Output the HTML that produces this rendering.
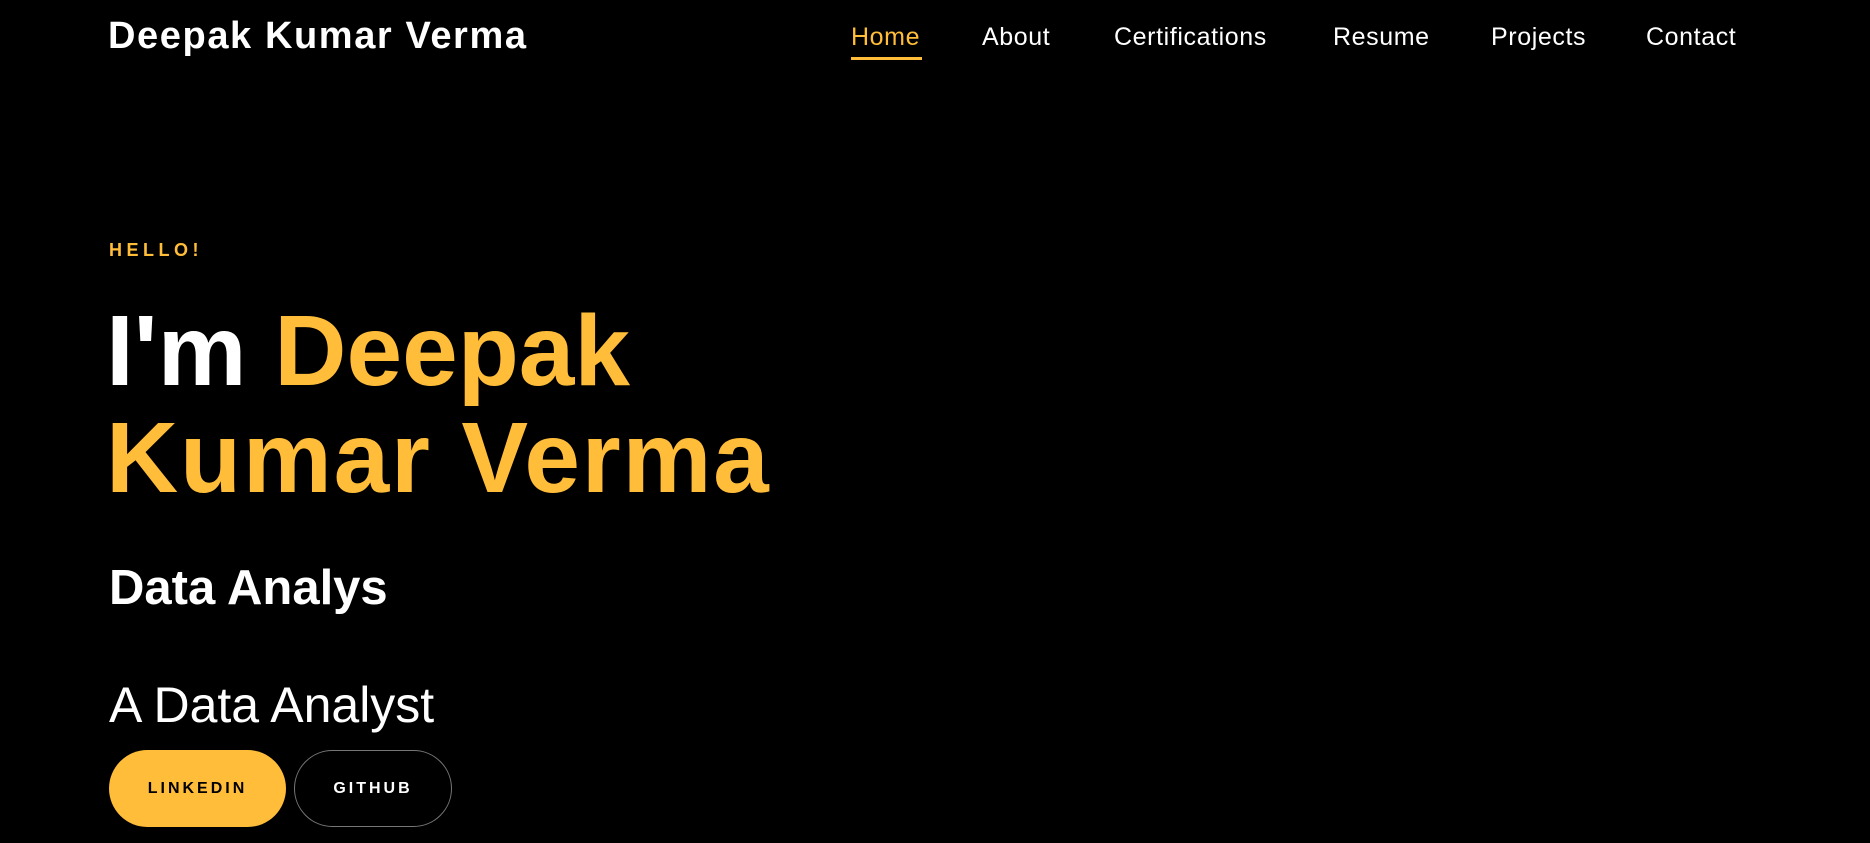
<!DOCTYPE html>
<html><head><meta charset="utf-8"><style>
*{margin:0;padding:0;box-sizing:border-box}
html,body{width:1870px;height:843px;background:#000;overflow:hidden;font-family:"Liberation Sans",sans-serif;color:#fff}
.logo{position:absolute;left:108px;top:15px;font-size:38px;font-weight:bold;letter-spacing:1.6px;white-space:nowrap}
.nav a{position:absolute;top:23px;font-size:25px;letter-spacing:0.6px;color:#fff;text-decoration:none;white-space:nowrap}
.nav a.act{color:#ffbd39}
.ul{position:absolute;left:851px;top:57px;width:71px;height:3px;background:#ffbd39}
.hello{position:absolute;left:109px;top:240px;font-size:18px;font-weight:bold;letter-spacing:4.5px;color:#ffbd39}
.h1{position:absolute;left:106px;top:298px;font-size:100px;font-weight:bold;line-height:107px;color:#ffbd39;white-space:nowrap}
.h1 .w{color:#fff}
.h1 .k{letter-spacing:1.8px}
.h2{position:absolute;left:109px;top:560px;font-size:49px;font-weight:bold;white-space:nowrap}
.h3{position:absolute;left:109px;top:676px;font-size:50px;white-space:nowrap}
.btn{position:absolute;top:750px;height:77px;border-radius:39px;display:flex;align-items:center;justify-content:center;font-size:16px;font-weight:bold;letter-spacing:3px}
.b1{left:109px;width:177px;background:#ffbd39;color:#000}
.b2{left:294px;width:158px;border:1px solid #777;color:#fff}
</style></head><body>
<div class="logo">Deepak Kumar Verma</div>
<div class="nav">
<a class="act" style="left:851px">Home</a>
<a style="left:982px">About</a>
<a style="left:1114px">Certifications</a>
<a style="left:1333px">Resume</a>
<a style="left:1491px">Projects</a>
<a style="left:1646px">Contact</a>
</div>
<div class="ul"></div>
<div class="hello">HELLO!</div>
<div class="h1"><span class="w">I'm</span> Deepak<br><span class="k">Kumar Verma</span></div>
<div class="h2">Data Analys</div>
<div class="h3">A Data Analyst</div>
<div class="btn b1">LINKEDIN</div>
<div class="btn b2">GITHUB</div>
</body></html>
